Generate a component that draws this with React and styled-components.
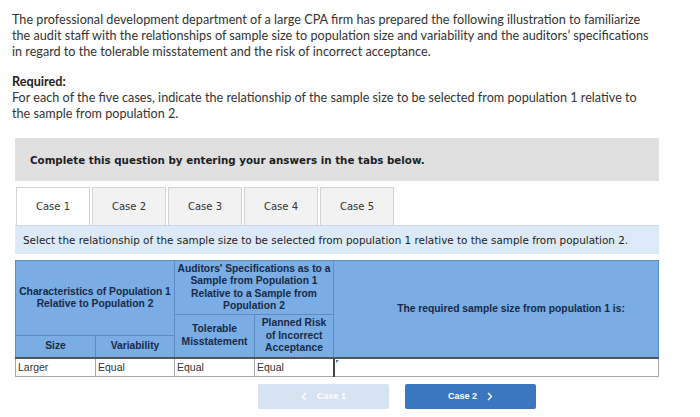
import React from 'react';
import styled, { createGlobalStyle } from 'styled-components';

const GlobalStyle = createGlobalStyle`
    body {
        margin: 0;
        background: #fff;
        font-family: "Lato", "Liberation Sans", sans-serif;
    }
`;

const Page = styled.div`
    width: 700px;
    height: 417px;
    overflow: hidden;
    padding: 12px 0 0 12px;
    box-sizing: border-box;
`;

const Intro = styled.p`
    margin: 0;
    white-space: nowrap;
    font-size: 12.65px;
    line-height: 16px;
    color: #333;
`;

const Required = styled.p`
    margin: 14px 0 0 0;
    white-space: nowrap;
    font-size: 12.65px;
    line-height: 16px;
    color: #333;

    strong {
        font-weight: 700;
        color: #222;
    }
`;

const Panel = styled.div`
    margin: 0 0 0 3px;
    width: 644px;
`;

const Banner = styled.div`
    margin-top: 16px;
    height: 43px;
    background: #e0e0e0;
    display: flex;
    align-items: center;
    padding-left: 15px;
    font-family: "DejaVu Sans", Verdana, sans-serif;
    font-size: 10.3px;
    font-weight: 700;
    color: #1e1e1e;
`;

const Tabs = styled.div`
    display: flex;
    gap: 2px;
    margin-top: 6px;
    padding-left: 1px;
`;

const Tab = styled.div`
    width: 74px;
    height: 38px;
    box-sizing: border-box;
    display: flex;
    align-items: center;
    justify-content: center;
    border: 1px solid #d4d4d4;
    border-bottom: none;
    background: ${p => (p.$active ? '#fff' : '#f2f2f2')};
    font-family: "DejaVu Sans", Verdana, sans-serif;
    font-size: 10px;
    color: #333;
`;

const Instruction = styled.div`
    height: 29px;
    background: #dceaf8;
    border-top: 1px solid #c9d9ea;
    box-sizing: border-box;
    display: flex;
    align-items: center;
    padding-left: 8px;
    font-family: "DejaVu Sans", Verdana, sans-serif;
    font-size: 10.4px;
    color: #222;
`;

const Table = styled.table`
    margin-top: 6px;
    width: 644px;
    border-collapse: collapse;
    table-layout: fixed;
    font-family: "Liberation Sans", Arial, sans-serif;
    font-size: 10.3px;
`;

const Head = styled.th`
    background: #79ade3;
    border: 1px solid #5a8dc6;
    color: #182a48;
    font-weight: 700;
    line-height: 12.5px;
    padding: ${p => (p.$wide ? '1px 2px 1px 32px' : '1px 2px')};
    text-align: center;
    vertical-align: middle;
    border-bottom: ${p => (p.$last ? '2px solid #555' : '1px solid #5a8dc6')};
`;

const Cell = styled.td`
    border: 1px solid #a8a8a8;
    border-left: ${p => (p.$input ? '2px solid #444' : '1px solid #a8a8a8')};
    height: 17px;
    padding: 0 2px;
    color: #333;
    font-size: 10.5px;
    position: relative;
`;

const Marker = styled.span`
    position: absolute;
    left: 1px;
    top: 1px;
    width: 0;
    height: 0;
    border-top: 3px solid #4a6fa0;
    border-right: 3px solid transparent;
`;

const Nav = styled.div`
    display: flex;
    gap: 16px;
    margin: 7px 0 0 246px;
`;

const NavButton = styled.div`
    width: 131px;
    height: 25px;
    display: flex;
    align-items: center;
    justify-content: center;
    gap: 10px;
    border-radius: 2px;
    background: ${p => (p.$disabled ? '#d6e3f1' : '#3b77be')};
    color: #fff;
    font-family: "Liberation Sans", Arial, sans-serif;
    font-weight: 700;
    font-size: 9px;
`;

const Chevron = ({ dir }) => (
    <svg width="6" height="9" viewBox="0 0 6 9">
        <path
            d={dir === 'left' ? 'M5 1 L1.5 4.5 L5 8' : 'M1 1 L4.5 4.5 L1 8'}
            fill="none"
            stroke="#fff"
            strokeWidth="1.4"
        />
    </svg>
);

const App = () => {
    const cases = ['Case 1', 'Case 2', 'Case 3', 'Case 4', 'Case 5'];
    return (
        <Page>
            <GlobalStyle />
            <Intro>
                The professional development department of a large CPA firm has prepared the following illustration to familiarize
                <br />
                the audit staff with the relationships of sample size to population size and variability and the auditors’ specifications
                <br />
                in regard to the tolerable misstatement and the risk of incorrect acceptance.
            </Intro>
            <Required>
                <strong>Required:</strong>
                <br />
                For each of the five cases, indicate the relationship of the sample size to be selected from population 1 relative to
                <br />
                the sample from population 2.
            </Required>
            <Panel>
                <Banner>Complete this question by entering your answers in the tabs below.</Banner>
                <Tabs>
                    {cases.map((c, i) => (
                        <Tab key={c} $active={i === 0}>{c}</Tab>
                    ))}
                </Tabs>
                <Instruction>
                    Select the relationship of the sample size to be selected from population 1 relative to the sample from population 2.
                </Instruction>
                <Table>
                    <colgroup>
                        <col style={{ width: 80 }} />
                        <col style={{ width: 79 }} />
                        <col style={{ width: 80 }} />
                        <col style={{ width: 79 }} />
                        <col />
                    </colgroup>
                    <thead>
                        <tr style={{ height: 54 }}>
                            <Head colSpan={2} rowSpan={2}>Characteristics of Population 1 Relative to Population 2</Head>
                            <Head colSpan={2}>Auditors' Specifications as to a Sample from Population 1 Relative to a Sample from Population 2</Head>
                            <Head rowSpan={3} $last $wide>The required sample size from population 1 is:</Head>
                        </tr>
                        <tr style={{ height: 21 }}>
                            <Head rowSpan={2} $last>Tolerable Misstatement</Head>
                            <Head rowSpan={2} $last>Planned Risk of Incorrect Acceptance</Head>
                        </tr>
                        <tr style={{ height: 22 }}>
                            <Head $last>Size</Head>
                            <Head $last>Variability</Head>
                        </tr>
                    </thead>
                    <tbody>
                        <tr>
                            <Cell>Larger</Cell>
                            <Cell>Equal</Cell>
                            <Cell>Equal</Cell>
                            <Cell>Equal</Cell>
                            <Cell $input><Marker /></Cell>
                        </tr>
                    </tbody>
                </Table>
            </Panel>
            <Nav>
                <NavButton $disabled><Chevron dir="left" />Case 1</NavButton>
                <NavButton>Case 2<Chevron dir="right" /></NavButton>
            </Nav>
        </Page>
    );
};

export default App;
